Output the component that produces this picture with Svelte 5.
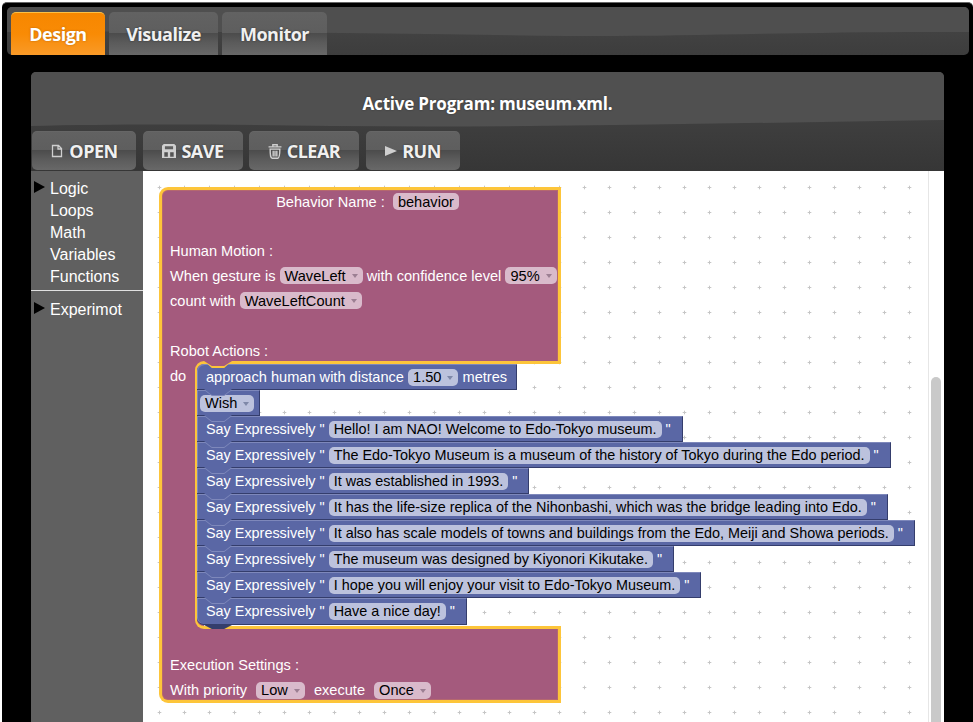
<script>
  const tabs = ['Design', 'Visualize', 'Monitor'];
  const categories = ['Logic', 'Loops', 'Math', 'Variables', 'Functions'];
  const says = [
    'Hello! I am NAO! Welcome to Edo-Tokyo museum.',
    'The Edo-Tokyo Museum is a museum of the history of Tokyo during the Edo period.',
    'It was established in 1993.',
    'It has the life-size replica of the Nihonbashi, which was the bridge leading into Edo.',
    'It also has scale models of towns and buildings from the Edo, Meiji and Showa periods.',
    'The museum was designed by Kiyonori Kikutake.',
    'I hope you will enjoy your visit to Edo-Tokyo Museum.',
    'Have a nice day!'
  ];
</script>

<div class="frame">
  <header class="tabbar">
    <svg class="gloss" viewBox="0 0 961 48" preserveAspectRatio="none" aria-hidden="true">
      <path d="M0 0H961V25C800 24 680 30 560 29C380 27 200 23 0 25Z" />
    </svg>
    {#each tabs as tab, i}
      <button class="tab" class:active={i === 0}>{tab}</button>
    {/each}
  </header>

  <section class="panel">
    <div class="head">
      <svg class="gloss" viewBox="0 0 913 99" preserveAspectRatio="none" aria-hidden="true">
        <path d="M0 0H913V48C700 51 500 56 300 54C180 52 80 52 0 54Z" />
      </svg>
      <h1>Active Program: museum.xml.</h1>
      <div class="actions">
        <button class="action open">
          <svg viewBox="0 0 14 14"><path d="M2.5 1.5H8.5L11.5 4.5V12.5H2.5ZM8 1.5V5H11.5" /></svg>
          OPEN
        </button>
        <button class="action save">
          <svg viewBox="1 1 12 12"><path class="solid" d="M2.5 1H11.5L13 2.5V13H1V2.5ZM3.5 3V5.5H10.5V3ZM3 8V12H6V8ZM8 8V12H11V8Z" /></svg>
          SAVE
        </button>
        <button class="action clear">
          <svg viewBox="0.5 1 13 13.5"><path d="M1 3.5H13M5 3.5V1.5H9V3.5M2.5 5.5C2.5 12 3 14 4.5 14H9.5C11 14 11.5 12 11.5 5.5ZM5.3 7V12.5M7 7V12.5M8.7 7V12.5" /></svg>
          CLEAR
        </button>
        <button class="action run">
          <svg viewBox="0 0 12 12"><path class="solid" d="M0 1L12 6L0 11Z" /></svg>
          RUN
        </button>
      </div>
    </div>

    <div class="body">
      <nav class="toolbox">
        <ul>
          {#each categories as c, i}
            <li class:arrow={i === 0}>{c}</li>
          {/each}
        </ul>
        <hr />
        <ul>
          <li class="arrow">Experimot</li>
        </ul>
      </nav>

      <div class="workspace">
        <svg class="grid" aria-hidden="true">
          <defs>
            <pattern id="dots" x="14" y="14" width="25" height="25" patternUnits="userSpaceOnUse">
              <path d="M2.5 0V5M0 2.5H5" stroke="#ededed" stroke-width="1" />
              <path d="M2.5 1V4M1 2.5H4" stroke="#c6c6c6" stroke-width="1" />
            </pattern>
          </defs>
          <rect width="100%" height="100%" fill="url(#dots)" />
        </svg>

        <div class="block">
          <div class="sect top">
            <div class="rows">
              <div class="row title">Behavior Name : <span class="pill">behavior</span></div>
              <div class="row"></div>
              <div class="row">Human Motion :</div>
              <div class="row">When gesture is <span class="pill">WaveLeft<i></i></span> with confidence level <span class="pill">95%<i></i></span></div>
              <div class="row">count with <span class="pill">WaveLeftCount<i></i></span></div>
              <div class="row"></div>
              <div class="row">Robot Actions :</div>
            </div>
          </div>

          <div class="mid">
            <div class="arm">do</div>
            <div class="stack">
              <div class="stmt first">approach human with distance <span class="pill">1.50<i></i></span> metres</div>
              <div class="stmt wish"><span class="pill">Wish<i></i></span></div>
              {#each says as s}
                <div class="stmt say">Say Expressively " <span class="pill">{s}</span> "</div>
              {/each}
            </div>
          </div>

          <div class="sect bottom">
            <div class="rows">
              <div class="row spacer"></div>
              <div class="row">Execution Settings :</div>
              <div class="row">With priority <span class="pill gap">Low<i></i></span> execute <span class="pill gap">Once<i></i></span></div>
            </div>
          </div>
        </div>

        <div class="scroll"><div class="thumb"></div></div>
      </div>
    </div>
  </section>
</div>

<style>
  :global(body) {
    margin: 0;
    background: #fff;
    overflow: hidden;
  }
  .frame {
    box-sizing: border-box;
    margin: 2px 0 0 2px;
    width: 971px;
    height: 720px;
    padding: 5px 4px 0 5px;
    background: #000;
    border-top: 1px solid #666;
    border-radius: 5px 5px 0 0;
    overflow: hidden;
    font-family: "Liberation Sans", Arial, sans-serif;
  }
  .tabbar {
    position: relative;
    display: flex;
    gap: 4px;
    box-sizing: border-box;
    height: 48px;
    margin-top: -1px;
    padding: 5px 0 0 4px;
    border-radius: 5px;
    overflow: hidden;
    background: linear-gradient(#474747, #3d3d3d);
  }
  .gloss {
    position: absolute;
    left: 0;
    top: 0;
    width: 100%;
    height: 100%;
    pointer-events: none;
  }
  .tabbar .gloss path { fill: #4f4f4f; }
  .tab, .action {
    position: relative;
    border: 0;
    padding: 0;
    color: #f0f0f0;
    font-family: "Open Sans", sans-serif;
    font-weight: 700;
    letter-spacing: -0.5px;
    text-shadow: 0 0 2px rgba(0, 0, 0, .45);
    background: linear-gradient(#626262 0, #5e5e5e 49%, #4c4c4c 50%, #5b5b5b 72%, #686868 100%);
  }
  .tab {
    height: 43px;
    border-radius: 5px 5px 0 0;
    font-size: 18px;
    padding-top: 1px;
  }
  .tab:nth-of-type(1) { width: 94px; }
  .tab:nth-of-type(2) { width: 109px; }
  .tab:nth-of-type(3) { width: 105px; }
  .tab.active {
    color: #fff;
    padding-top: 0;
    border-top: 1px solid #fdc045;
    background: linear-gradient(#f78700, #f98b05 50%, #f99a28 100%);
    text-shadow: 0 0 2px rgba(120, 60, 0, .5);
  }
  .panel {
    margin: 17px 24px 0 24px;
    width: 913px;
  }
  .head {
    position: relative;
    box-sizing: border-box;
    height: 99px;
    border-radius: 5px 5px 0 0;
    overflow: hidden;
    background: linear-gradient(#474747, #363636);
  }
  .head .gloss path { fill: #505050; }
  h1 {
    position: relative;
    margin: 0;
    height: 59px;
    line-height: 64px;
    text-align: center;
    color: #fff;
    font-family: "Open Sans", sans-serif;
    font-size: 17px;
    letter-spacing: -0.2px;
    font-weight: 700;
    text-shadow: 0 0 2px rgba(0, 0, 0, .4);
  }
  .actions {
    position: relative;
    display: flex;
    padding-left: 1px;
    height: 39px;
  }
  .action {
    display: flex;
    align-items: center;
    justify-content: center;
    gap: 5px;
    height: 39px;
    border-radius: 5px;
    font-size: 18px;
    box-shadow: inset 0 1px 0 rgba(255, 255, 255, .03);
  }
  .action svg {
    width: 14px;
    height: 14px;
    fill: none;
    stroke: #cfcfcf;
    stroke-width: 1.3;
  }
  .action svg .solid {
    fill: #cfcfcf;
    stroke: none;
    fill-rule: evenodd;
  }
  .open { width: 104px; margin-right: 7px; }
  .save { width: 100px; margin-right: 6px; }
  .clear { width: 110px; margin-right: 7px; }
  .clear svg { height: 15px; margin-top: 2px; }
  .run { width: 94px; }
  .run svg { width: 12px; height: 12px; }

  .body {
    display: flex;
    height: 552px;
  }
  .toolbox {
    width: 112px;
    flex: none;
    background: #606060;
    color: #fff;
    font-size: 16px;
  }
  ul {
    list-style: none;
    margin: 0;
    padding: 7px 0 2px;
  }
  li {
    position: relative;
    height: 22px;
    line-height: 22px;
    padding-left: 19px;
  }
  li.arrow::before {
    content: "";
    position: absolute;
    left: 3px;
    top: 3px;
    border-left: 11px solid #000;
    border-top: 6px solid transparent;
    border-bottom: 6px solid transparent;
  }
  hr {
    margin: 0;
    border: 0;
    height: 1px;
    background: #e0e0e0;
  }
  .toolbox ul + hr + ul { padding-top: 8px; }

  .workspace {
    position: relative;
    flex: 1;
    background: #fff;
    overflow: hidden;
  }
  .grid {
    position: absolute;
    left: 0;
    top: 0;
    width: 785px;
    height: 100%;
  }
  .scroll {
    position: absolute;
    left: 785px;
    top: 0;
    bottom: 0;
    width: 16px;
    border-left: 1px solid #e6e6e6;
  }
  .thumb {
    position: absolute;
    left: 2px;
    top: 206px;
    bottom: 0;
    width: 10px;
    border-radius: 5px 5px 0 0;
    background: #c9c9c9;
  }

  .block {
    position: absolute;
    left: 16px;
    top: 16px;
    width: 402px;
    color: #fff;
    font-size: 14.6px;
    --y: #fdc53a;
    --p: #a45a7d;
    --l: #b5686f;
  }
  .sect {
    position: relative;
    box-sizing: border-box;
    background: var(--p);
    border: 3px solid var(--y);
  }
  .top {
    border-bottom: 0;
    border-radius: 9px 0 0 0;
    height: 177px;
    box-shadow: inset 0 1px 0 var(--l), inset 1px 0 0 var(--l), inset -1px 0 0 var(--l);
  }
  .top::after, .bottom::before {
    content: "";
    position: absolute;
    left: 42px;
    right: 0;
    height: 3px;
    background: var(--y);
  }
  .top::after { bottom: 0; }
  .bottom::before { top: 0; }
  .bottom {
    border-top: 0;
    border-radius: 0 0 0 9px;
    height: 77px;
    box-shadow: inset 0 -1px 0 var(--l), inset 1px 0 0 var(--l), inset -1px 0 0 var(--l);
  }
  .row {
    display: flex;
    align-items: center;
    height: 25px;
    padding-left: 8px;
    white-space: pre;
  }
  .top .row:first-child { height: 23px; }
  .title {
    justify-content: center;
    padding-left: 15px;
  }
  .title .pill { margin-left: 4px; }
  .row.spacer { height: 26.5px; }

  .pill {
    display: inline-flex;
    align-items: center;
    gap: 6px;
    height: 17px;
    padding: 0 5px;
    border-radius: 5px;
    background: #d9bacb;
    color: #000;
    white-space: nowrap;
  }
  .pill i {
    display: block;
    margin-top: 1px;
    border-top: 4px solid #9c7f93;
    border-left: 3px solid transparent;
    border-right: 3px solid transparent;
  }
  .gap { margin: 0 5px; }

  .mid {
    display: flex;
    align-items: stretch;
    border-left: 3px solid var(--y);
    height: 262px;
  }
  .arm {
    flex: none;
    width: 42px;
    margin-right: -9px;
    padding: 4px 0 0 8px;
    box-sizing: border-box;
    background: var(--p);
    box-shadow: inset 1px 0 0 var(--l);
  }
  .stack {
    position: relative;
    z-index: 1;
    flex: none;
    display: flex;
    flex-direction: column;
    align-items: flex-start;
    width: 0;
  }
  .stack::before {
    content: "";
    position: absolute;
    left: 0;
    top: -3px;
    width: 14px;
    height: 268px;
    border-left: 2px solid var(--y);
    border-top: 3px solid var(--y);
    border-bottom: 3px solid var(--y);
    border-radius: 9px 0 0 9px;
    box-sizing: border-box;
  }
  .stack::after {
    content: "";
    position: absolute;
    left: 9px;
    top: 261px;
    width: 28px;
    height: 4px;
    background: #343d6c;
    clip-path: polygon(0 0, 100% 0, 72% 100%, 28% 100%);
  }
  .stmt {
    position: relative;
    box-sizing: border-box;
    display: flex;
    align-items: center;
    height: 26px;
    margin-left: 2px;
    padding: 0 9px;
    background: #5a67a5;
    border-top: 1px solid #7e88bb;
    border-bottom: 1px solid #343d6c;
    border-right: 1px solid #343d6c;
    box-shadow: inset 1px 0 0 #7e88bb;
    white-space: pre;
  }
  .stmt::before, .stmt::after {
    content: "";
    position: absolute;
    left: 7px;
    width: 28px;
    clip-path: polygon(0 0, 100% 0, 72% 100%, 28% 100%);
  }
  .stmt::before {
    top: -1px;
    height: 6px;
    background: #7e88bb;
  }
  .stmt::after {
    top: -2px;
    height: 6px;
    background: #5a67a5;
  }
  .first { border-top-left-radius: 7px; }
  .first::before { background: var(--y); height: 7px; top: -4px; }
  .first::after { background: var(--p); height: 5px; top: -4px; }
  .stmt:last-child {
    border-bottom-left-radius: 7px;
    height: 27px;
    padding-bottom: 1px;
  }
  .wish { padding: 0 5px 0 3px; }
  .say { padding-right: 11px; font-size: 14.4px; }
  .stmt .pill { background: #bcc2dd; }
  .stmt .pill i { border-top-color: #7e88a8; }
</style>
